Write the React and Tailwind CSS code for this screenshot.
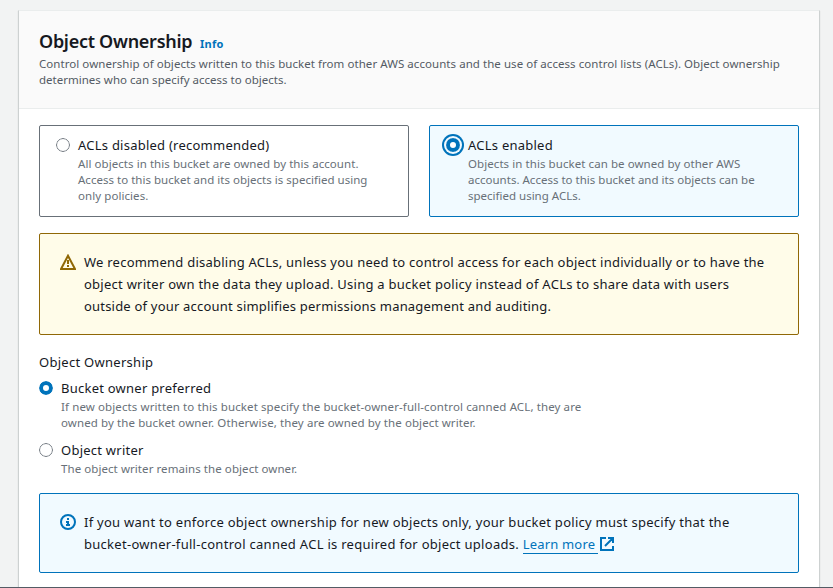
function Radio({ checked, focused }) {
  return (
    <svg
      className={`size-3.5 shrink-0 rounded-full ${focused ? 'shadow-[0_0_0_2px_#f1faff,0_0_0_4px_#0073bb]' : ''}`}
      viewBox="0 0 14 14"
    >
      {checked ? (
        <circle cx="7" cy="7" r="5" fill="#fff" stroke="#0073bb" strokeWidth="4" />
      ) : (
        <circle cx="7" cy="7" r="6.5" fill="#fff" stroke="#687078" />
      )}
    </svg>
  );
}

function Lines({ lines }) {
  return lines.map(([tracking, line]) => (
    <span key={line} className={`block whitespace-nowrap ${tracking}`}>{line}</span>
  ));
}

function Option({ label, lines, checked, focused }) {
  return (
    <div className="flex gap-2">
      <div className="pt-1"><Radio checked={checked} focused={focused} /></div>
      <div>
        <div className="leading-[22px]">{label}</div>
        <div className="text-[11.5px] leading-4 text-[#687078]"><Lines lines={lines} /></div>
      </div>
    </div>
  );
}

function WarningIcon() {
  return (
    <svg className="mt-[3px] size-4 shrink-0" viewBox="0 0 16 16" fill="none" stroke="#906806" strokeWidth="2">
      <path d="M8 1.7 15 15H1L8 1.7Z" />
      <path d="M8 6v4M8 11v2" />
    </svg>
  );
}

function InfoIcon() {
  return (
    <svg className="mt-[3px] size-4 shrink-0" viewBox="0 0 16 16" fill="none" stroke="#0073bb" strokeWidth="2">
      <circle cx="8" cy="8" r="7" />
      <path d="M8 4v2M6 8h2v3M6 11h4" />
    </svg>
  );
}

function ExternalIcon() {
  return (
    <svg className="ml-0.5 inline-block size-3.5 align-[-2px]" viewBox="0 0 14 14" fill="none" stroke="#0073bb" strokeWidth="2">
      <path d="M6 1H1v12h12V9M8 1h5v5M13 1 5 9" />
    </svg>
  );
}

export default function App() {
  return (
    <div className="h-[588px] w-[833px] overflow-hidden border-b border-[#545b64] bg-[#f2f3f3] pt-2.5 pr-[13px] pl-[18px] font-['Noto_Sans',sans-serif] text-[13px] tracking-[0.24px] text-[#16191f]">
      <section className="h-[620px] border border-t-[#eaeded] border-x-[#cdd1d1] bg-white shadow-[0_1px_1px_0_rgba(0,28,36,0.15)]">
        <header className="h-[98px] border-b border-[#eaeded] bg-[#fafafa] px-5 pt-[19px]">
          <div className="flex items-baseline gap-2">
            <h2 className="w-[153px] text-[18px] leading-[22px] font-semibold tracking-[-0.28px] whitespace-nowrap">Object Ownership</h2>
            <a className="text-[11px] leading-4 font-bold text-[#0073bb]">Info</a>
          </div>
          <p className="mt-1 text-[11.5px] leading-4 text-[#545b64]">
            <Lines lines={[
              ['tracking-[0.055px]', 'Control ownership of objects written to this bucket from other AWS accounts and the use of access control lists (ACLs). Object ownership'],
              ['tracking-[0.01px]', 'determines who can specify access to objects.'],
            ]} />
          </p>
        </header>
        <div className="px-5 pt-4">
          <div className="grid grid-cols-2 gap-5">
            <div className="h-[92px] rounded-[2px] border border-[#687078] px-4 pt-2">
              <Option label="ACLs disabled (recommended)" lines={[
                ['tracking-[0.06px]', 'All objects in this bucket are owned by this account.'],
                ['tracking-[0.02px]', 'Access to this bucket and its objects is specified using'],
                ['tracking-[0.07px]', 'only policies.'],
              ]} />
            </div>
            <div className="h-[92px] rounded-[2px] border border-[#0073bb] bg-[#f1faff] px-4 pt-2">
              <Option checked focused label="ACLs enabled" lines={[
                ['tracking-[0.07px]', 'Objects in this bucket can be owned by other AWS'],
                ['tracking-[0.01px]', 'accounts. Access to this bucket and its objects can be'],
                ['tracking-[0px]', 'specified using ACLs.'],
              ]} />
            </div>
          </div>
          <div className="mt-4 flex h-[102px] gap-2 rounded-[2px] border border-[#906806] bg-[#fffce9] px-5 pt-[17px] leading-[22px]">
            <WarningIcon />
            <div><Lines lines={[
              ['tracking-[0.235px]', 'We recommend disabling ACLs, unless you need to control access for each object individually or to have the'],
              ['tracking-[0.255px]', 'object writer own the data they upload. Using a bucket policy instead of ACLs to share data with users'],
              ['tracking-[0.2px]', 'outside of your account simplifies permissions management and auditing.'],
            ]} /></div>
          </div>
          <div className="mt-4 leading-[22px] tracking-[0.28px]">Object Ownership</div>
          <div className="mt-1">
            <Option checked label="Bucket owner preferred" lines={[
              ['tracking-[0.11px]', 'If new objects written to this bucket specify the bucket-owner-full-control canned ACL, they are'],
              ['tracking-[0.1px]', 'owned by the bucket owner. Otherwise, they are owned by the object writer.'],
            ]} />
          </div>
          <div className="mt-2">
            <Option label="Object writer" lines={[['tracking-[0.07px]', 'The object writer remains the object owner.']]} />
          </div>
          <div className="mt-4 flex h-20 gap-2 rounded-[2px] border border-[#0073bb] bg-[#f1faff] px-5 pt-[17px] leading-[22px]">
            <InfoIcon />
            <div className="whitespace-nowrap">
              <div className="tracking-[0.27px]">If you want to enforce object ownership for new objects only, your bucket policy must specify that the</div>
              <div className="tracking-[0.285px]">
                bucket-owner-full-control canned ACL is required for object uploads.{' '}
                <a className="tracking-[0.18px] text-[#0073bb]">
                  <span className="border-b border-[#0073bb] pr-[3px]">Learn more</span>
                  <ExternalIcon />
                </a>
              </div>
            </div>
          </div>
        </div>
      </section>
    </div>
  );
}
